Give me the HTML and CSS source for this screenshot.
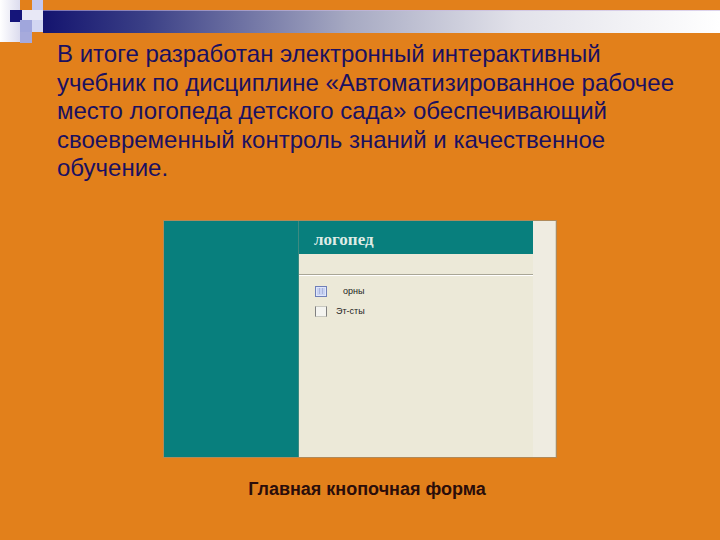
FILE: index.html
```html
<!DOCTYPE html>
<html lang="ru">
<head>
<meta charset="utf-8">
<title>Слайд</title>
<link rel="stylesheet" href="styles.css">
</head>
<body>
<div class="slide">
  <svg class="deco" width="720" height="44" viewBox="0 0 720 44" aria-hidden="true">
    <defs>
      <linearGradient id="bar" x1="0" y1="0" x2="1" y2="0">
        <stop offset="0" stop-color="#14146f"/>
        <stop offset="0.15" stop-color="#3a3f86"/>
        <stop offset="0.45" stop-color="#a6a9c2"/>
        <stop offset="0.7" stop-color="#e2e2ea"/>
        <stop offset="1" stop-color="#ffffff"/>
      </linearGradient>
      <linearGradient id="side" x1="0" y1="0" x2="1" y2="0">
        <stop offset="0" stop-color="#ffffff"/>
        <stop offset="1" stop-color="#dcdcee"/>
      </linearGradient>
    </defs>
    <rect x="0" y="0" width="20" height="42" fill="url(#side)"/>
    <rect x="10" y="10" width="12" height="12" fill="#15157a"/>
    <rect x="32" y="0" width="11" height="10" fill="#c4c8ee"/>
    <rect x="22" y="10" width="21" height="10" fill="#e8e8f6"/>
    <rect x="20" y="20" width="12" height="12" fill="#a0a6dc"/>
    <rect x="32" y="20" width="11" height="12" fill="#d2d6f2"/>
    <rect x="20" y="32" width="12" height="11" fill="#a6aadc"/>
    <rect x="43" y="10" width="677" height="23" fill="url(#bar)"/>
    <rect x="43" y="10" width="677" height="1" fill="#c8b8e0" opacity="0.6"/>
  </svg>

  <p class="lead">В итоге разработан электронный интерактивный<br>учебник по дисциплине «Автоматизированное рабочее<br>место логопеда детского сада» обеспечивающий<br>своевременный контроль знаний и качественное<br>обучение.</p>

  <figure class="figure">
    <div class="shot">
      <div class="nav"></div>
      <div class="main">
        <div class="head">логопед</div>
        <div class="sep"></div>
        <ul class="items">
          <li class="item">
            <svg class="btn" width="12" height="11" viewBox="0 0 12 11" aria-hidden="true">
              <rect x="0.5" y="0.5" width="11" height="10" fill="#dfe6fa" stroke="#6f7fb8"/>
              <rect x="2" y="2" width="8" height="7" fill="#c8d2f2"/>
              <path d="M4 3h1M7 3h1M4 5h1M7 5h1M4 7h1M7 7h1" stroke="#8a96c8" stroke-width="1"/>
            </svg>
            <span class="label first">орны</span>
          </li>
          <li class="item">
            <svg class="btn" width="12" height="11" viewBox="0 0 12 11" aria-hidden="true">
              <rect x="0.5" y="0.5" width="11" height="10" fill="#f4f4f0" stroke="#c8c8c0"/>
              <path d="M0.5 0.5v10M11.5 0.5v10" stroke="#808080"/>
            </svg>
            <span class="label">Эт-сты</span>
          </li>
        </ul>
      </div>
      <div class="strip"></div>
    </div>
    <figcaption class="caption">Главная кнопочная форма</figcaption>
  </figure>
</div>
</body>
</html>
```

FILE: styles.css
```css
html, body {
  margin: 0;
  padding: 0;
}
body {
  background: #e2801b;
  width: 720px;
  height: 540px;
  overflow: hidden;
  font-family: "Liberation Sans", Arial, sans-serif;
}
.slide {
  position: relative;
  width: 720px;
  height: 540px;
  background: #e2801b;
}
.deco {
  position: absolute;
  left: 0;
  top: 0;
  display: block;
}
.lead {
  margin: 0;
  padding: 40px 0 0 57px;
  font-size: 24px;
  line-height: 28.5px;
  color: #1b1060;
  white-space: nowrap;
}
.figure {
  margin: 37px 0 0 163px;
  width: 394px;
}
.shot {
  display: flex;
  height: 238px;
  box-sizing: border-box;
  border: 1px solid #b08a5a;
  background: #ece9d8;
}
.nav {
  width: 134px;
  background: #087f7d;
  border-right: 1px solid #3d8a80;
}
.main {
  width: 234px;
  display: flex;
  flex-direction: column;
}
.head {
  height: 33px;
  background: #087f7d;
  box-sizing: border-box;
  padding: 9px 0 0 15px;
  font-family: "Liberation Serif", "Times New Roman", serif;
  font-weight: bold;
  font-size: 17px;
  line-height: 20px;
  color: #dfece6;
}
.sep {
  margin-top: 20px;
  height: 1px;
  background: #a9a696;
  border-bottom: 1px solid #ffffff;
}
.items {
  list-style: none;
  margin: 10px 0 0 16px;
  padding: 0;
  display: flex;
  flex-direction: column;
  gap: 9px;
}
.item {
  display: flex;
  align-items: center;
  height: 11px;
}
.btn {
  display: block;
  flex: none;
}
.label {
  font-size: 9px;
  color: #222222;
  margin-left: 9px;
}
.label.first {
  margin-left: 16px;
}
.strip {
  flex: 1;
  background: #efece1;
  border-right: 1px solid #d8d4c4;
}
.caption {
  margin: 20px 0 0 0;
  padding-left: 14px;
  text-align: center;
  font-weight: bold;
  font-size: 18px;
  line-height: 22px;
  color: #2b0d0a;
}
```
